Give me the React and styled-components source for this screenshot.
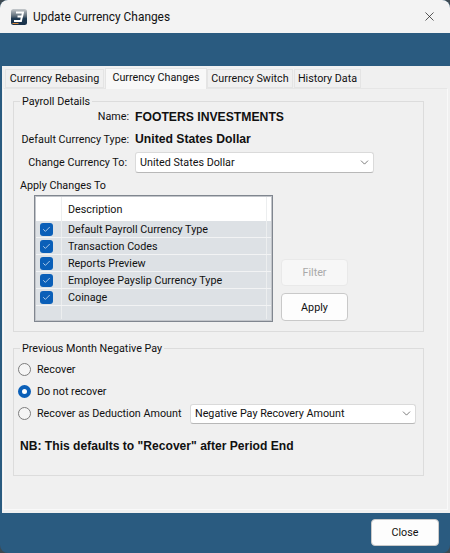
import styled, { createGlobalStyle } from "styled-components"
import { ChevronDown, X, Check } from "lucide-react"

const Global = createGlobalStyle`
  html, body { margin: 0; padding: 0; background: #3d4a52; }
  body { font-family: Roboto, "Liberation Sans", Arial, sans-serif; font-size: 10.75px; color: #111; }
  * { box-sizing: border-box; }
`

const Win = styled.div`
  width: 450px;
  height: 553px;
  display: flex;
  flex-direction: column;
  background: #2a5b80;
  border-radius: 8px;
  overflow: hidden;
  white-space: nowrap;
`

const TitleBar = styled.div`
  height: 33px;
  background: #f3f3f3;
  display: flex;
  align-items: center;
  padding: 0 13px 0 11px;
  font-size: 11.9px;
`

const TitleText = styled.div`
  margin-left: 6px;
  flex: 1;
`

const Band = styled.div`
  height: 33px;
`

const Body = styled.div`
  flex: 1;
  margin-left: 2px;
  background: #f0f0f0;
  padding: 3px 2px 3px 1px;
  display: flex;
  flex-direction: column;
`

const Tabs = styled.div`
  display: flex;
  height: 19px;
  margin-left: 2px;
  position: relative;
  z-index: 1;
`

const Tab = styled.div`
  height: ${p => (p.$active ? "21px" : "19px")};
  margin-top: ${p => (p.$active ? "-1px" : "0")};
  width: ${p => p.$w}px;
  margin-right: ${p => (p.$active ? "0" : "1px")};
  background: ${p => (p.$active ? "#f8f8f8" : "#f0f0f0")};
  border: 1px solid #e4e4e4;
  border-bottom: ${p => (p.$active ? "none" : "1px solid #e4e4e4")};
  display: flex;
  align-items: center;
  justify-content: center;
  padding-bottom: ${p => (p.$active ? "3px" : "0")};
`

const Panel = styled.div`
  flex: 1;
  border: 1px solid #f9f9f9;
  border-top-color: #e6e6e6;
  padding: 5px 23px 0 9px;
  display: flex;
  flex-direction: column;
  gap: 9px;
`

const Group = styled.fieldset`
  margin: 0;
  padding: 0;
  border: 1px solid #dcdcdc;
  height: ${p => p.$h}px;
  min-width: 0;
  position: relative;
`

const Legend = styled.legend`
  margin-left: 6px;
  padding: 0 2px;
  line-height: 15px;
`

const InfoRow = styled.div`
  display: grid;
  grid-template-columns: 115px 1fr;
  column-gap: 6px;
  align-items: center;
  height: ${p => p.$h || 23}px;
  margin-top: ${p => p.$mt || 0}px;
`

const Label = styled.div`
  text-align: right;
  padding-right: ${p => p.$pr || 0}px;
`

const Value = styled.div`
  font-family: "Liberation Sans", Arial, sans-serif;
  font-weight: 700;
  font-size: 12.2px;
`

const Select = styled.div`
  height: ${p => p.$h}px;
  width: ${p => p.$w}px;
  background: #fff;
  border: 1px solid #dadada;
  border-bottom-color: #b8b8b8;
  border-radius: 3px;
  display: flex;
  align-items: center;
  justify-content: space-between;
  padding: 0 2px 0 4px;
`

const SectionLabel = styled.div`
  margin: 5px 0 0 6px;
  line-height: 14px;
`

const ListRow = styled.div`
  display: flex;
  align-items: flex-end;
  margin: 2px 0 0 20px;
  gap: 8px;
`

const Grid = styled.div`
  width: 239px;
  height: 127px;
  border: 1px solid #80868f;
  box-shadow: inset 0 0 0 1px #c2c5ca;
  background: #dde1e5;
  display: flex;
  flex-direction: column;
  padding-top: 1px;
`

const Head = styled.div`
  height: 24px;
  flex: none;
  margin: 0 1px;
  background: #fff;
  display: grid;
  grid-template-columns: 25px 1fr;
  align-items: center;
`

const Cell = styled.div`
  height: 100%;
  display: flex;
  align-items: center;
  padding-left: 6px;
  border-left: 1px solid #eceeef;
  margin-right: 4px;
  border-right: 1px solid #eceeef;
`

const Row = styled.div`
  height: ${p => p.$h || 17}px;
  flex: none;
  margin: 0 1px;
  display: grid;
  grid-template-columns: 25px 1fr;
  align-items: center;
  border-bottom: 1px solid ${p => (p.$last ? "transparent" : "#f2f3f4")};
`

const CheckCell = styled.div`
  display: flex;
  padding-left: 4px;
`

const CheckBox = styled.span`
  width: 13px;
  height: 13px;
  border-radius: 3px;
  background: #0a5fb8;
  color: #dfe9f5;
  display: flex;
  align-items: center;
  justify-content: center;
`

const Buttons = styled.div`
  display: flex;
  flex-direction: column;
  gap: 7px;
  padding-bottom: 1px;
`

const Btn = styled.div`
  width: ${p => p.$w || 67}px;
  height: ${p => p.$h || 27}px;
  border-radius: 4px;
  background: ${p => (p.$off ? "#f7f7f7" : "#fdfdfd")};
  border: 1px solid ${p => (p.$off ? "#e9e9e9" : "#c9c9c9")};
  color: ${p => (p.$off ? "#a9a9a9" : "#111")};
  display: flex;
  align-items: center;
  justify-content: center;
`

const RadioList = styled.div`
  padding: 2px 0 0 4px;
`

const RadioRow = styled.div`
  display: flex;
  align-items: center;
  height: ${p => p.$h || 22}px;
  gap: 6px;
`

const RadioDot = styled.span`
  width: 13px;
  height: 13px;
  border-radius: 50%;
  flex: none;
  background: ${p => (p.$on ? "#fff" : "#f5f5f5")};
  border: ${p => (p.$on ? "4px solid #0a5fb8" : "1px solid #7d7d7d")};
`

const RadioText = styled.span`
  width: ${p => (p.$w ? p.$w + "px" : "auto")};
  flex: none;
`

const Note = styled.div`
  margin: 14px 0 0 6px;
  font-family: "Liberation Sans", Arial, sans-serif;
  font-size: 12.1px;
  font-weight: 700;
`

const Footer = styled.div`
  height: 40px;
  display: flex;
  justify-content: flex-end;
  align-items: center;
  padding: 0 11px 1px 0;
`

const items = ["Default Payroll Currency Type", "Transaction Codes", "Reports Preview", "Employee Payslip Currency Type", "Coinage"]

function Logo() {
  return (
    <svg width="16" height="16" viewBox="0 0 16 16">
      <defs>
        <linearGradient id="logoBg" x1="0" y1="0" x2="0" y2="1">
          <stop offset="0" stopColor="#c5c9cc" />
          <stop offset="0.45" stopColor="#5c6b78" />
          <stop offset="0.6" stopColor="#1f3a52" />
          <stop offset="1" stopColor="#17304a" />
        </linearGradient>
      </defs>
      <rect width="16" height="16" rx="2.5" fill="url(#logoBg)" />
      <path d="M5 3.5h7l-.9 4H6.5M10.9 7.5l-.9 4.5H3" fill="none" stroke="#fff" strokeWidth="1.9" />
      <path d="M1.5 14.5h6" stroke="#d98a3a" strokeWidth="1.2" />
    </svg>
  )
}

export default function App() {
  return (
    <Win>
      <Global />
      <TitleBar>
        <Logo />
        <TitleText>Update Currency Changes</TitleText>
        <X size={15} strokeWidth={1.1} />
      </TitleBar>
      <Band />
      <Body>
        <Tabs>
          <Tab $w={99}>Currency Rebasing</Tab>
          <Tab $w={102} $active>Currency Changes</Tab>
          <Tab $w={86}>Currency Switch</Tab>
          <Tab $w={67}>History Data</Tab>
        </Tabs>
        <Panel>
          <Group $h={238}>
            <Legend>Payroll Details</Legend>
            <InfoRow $h={15}><Label>Name:</Label><Value>FOOTERS INVESTMENTS</Value></InfoRow>
            <InfoRow $h={24} $mt={3}><Label>Default Currency Type:</Label><Value>United States Dollar</Value></InfoRow>
            <InfoRow>
              <Label $pr={2}>Change Currency To:</Label>
              <Select $w={239} $h={21}>United States Dollar<ChevronDown size={13} strokeWidth={1} /></Select>
            </InfoRow>
            <SectionLabel>Apply Changes To</SectionLabel>
            <ListRow>
              <Grid>
                <Head><span /><Cell>Description</Cell></Head>
                {items.map(item => (
                  <Row key={item}>
                    <CheckCell><CheckBox><Check size={9} strokeWidth={2} /></CheckBox></CheckCell>
                    <Cell>{item}</Cell>
                  </Row>
                ))}
                <Row $h={14} $last><span /><Cell /></Row>
              </Grid>
              <Buttons>
                <Btn $off>Filter</Btn>
                <Btn $h={28}>Apply</Btn>
              </Buttons>
            </ListRow>
          </Group>
          <Group $h={135}>
            <Legend>Previous Month Negative Pay</Legend>
            <RadioList>
              <RadioRow><RadioDot /><RadioText>Recover</RadioText></RadioRow>
              <RadioRow><RadioDot $on /><RadioText>Do not recover</RadioText></RadioRow>
              <RadioRow $h={23}>
                <RadioDot />
                <RadioText $w={147}>Recover as Deduction Amount</RadioText>
                <Select $w={226} $h={20}>Negative Pay Recovery Amount<ChevronDown size={13} strokeWidth={1} /></Select>
              </RadioRow>
            </RadioList>
            <Note>NB: This defaults to "Recover" after Period End</Note>
          </Group>
        </Panel>
      </Body>
      <Footer><Btn $w={68} $h={27}>Close</Btn></Footer>
    </Win>
  )
}
